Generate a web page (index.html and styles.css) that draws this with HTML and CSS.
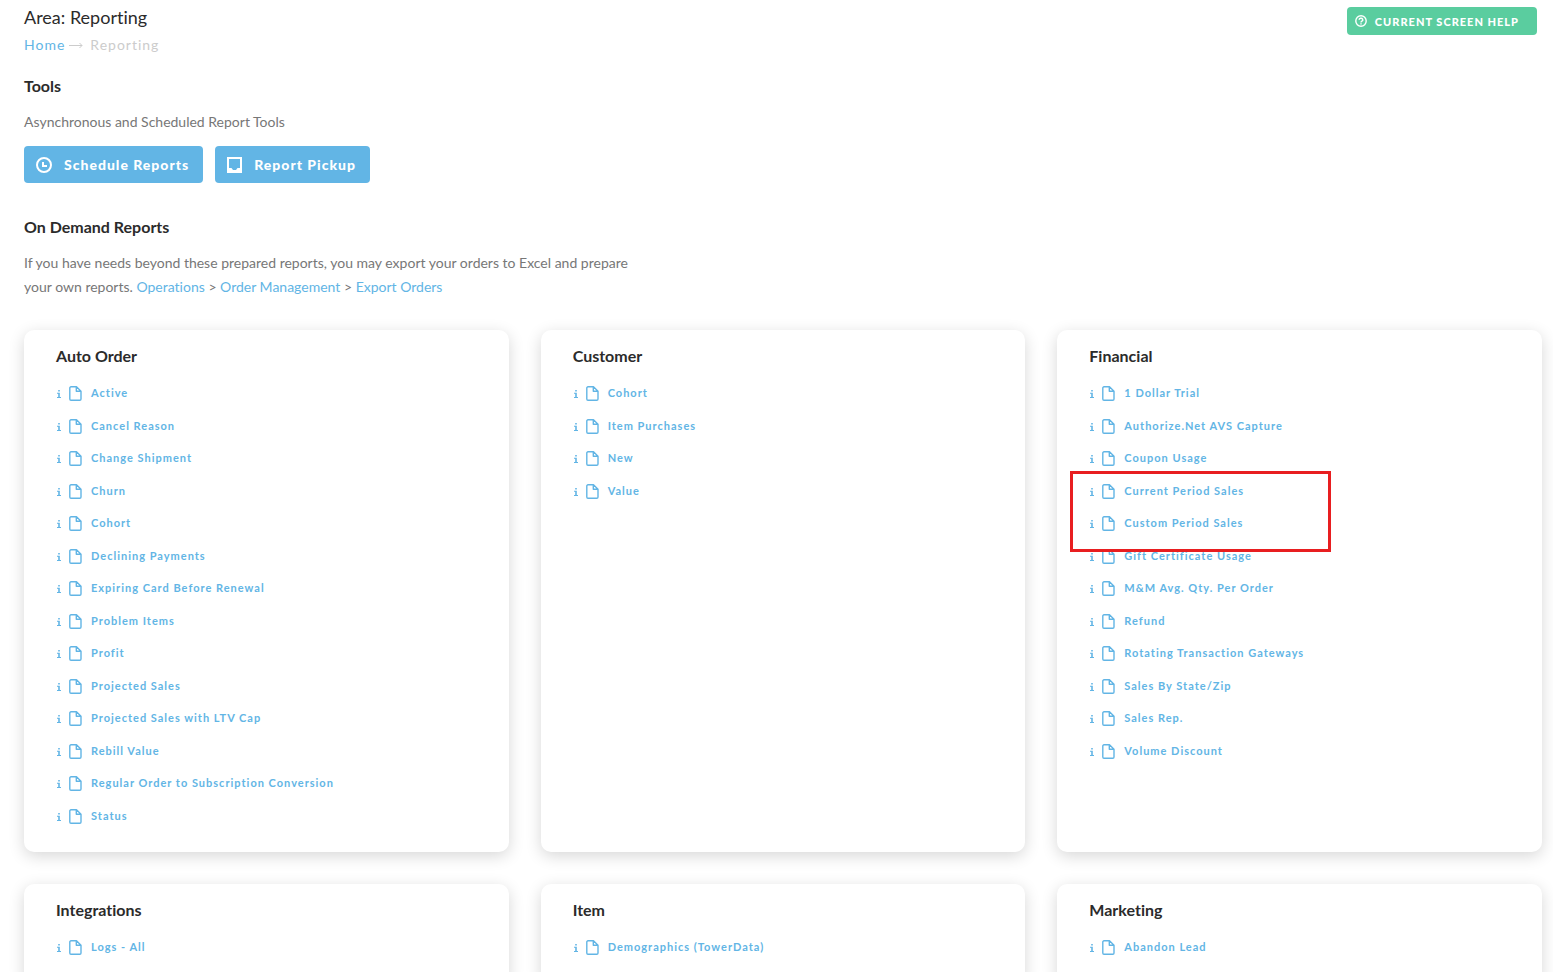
FILE: index.html
```html
<!DOCTYPE html>
<html lang="en">
<head>
  <meta charset="UTF-8" />
  <meta name="viewport" content="width=device-width, initial-scale=1.0"/>
  <title>Area: Reporting</title>
  <link rel="stylesheet" href="styles.css">
</head>
<body>
  <header class="page-header">
    <div>
      <h1>Area: Reporting</h1>
      <nav class="breadcrumb" aria-label="Breadcrumb">
        <a href="#">Home</a>
        <svg width="14" height="7" viewBox="0 0 14 7" fill="none" stroke="currentColor"><path d="M0 3.5h13M10.5 1l2.5 2.5L10.5 6"/></svg>
        <span>Reporting</span>
      </nav>
    </div>
    <button type="button" class="btn-help">
      <svg width="12" height="12" viewBox="0 0 12 12" fill="none" stroke="currentColor" stroke-width="1.4"><circle cx="6" cy="6" r="5.2"/><path d="M4.2 4.9a1.8 1.6 0 1 1 2.7 1.3c-.6.3-.9.6-.9 1.2M6 8.300v1.200"/></svg>
      Current Screen Help
    </button>
  </header>

  <main>
    <section class="tools">
      <h2>Tools</h2>
      <p>Asynchronous and Scheduled Report Tools</p>
      <div class="buttons">
        <button type="button" class="btn">
          <svg width="16" height="16" viewBox="0 0 16 16" fill="none" stroke="currentColor" stroke-width="2"><circle cx="8" cy="8" r="7"/><path d="M7 5v4h4"/></svg>
          Schedule Reports
        </button>
        <button type="button" class="btn">
          <svg width="15" height="16" viewBox="0 0 15 16" fill="currentColor"><path fill-rule="evenodd" d="M0 0h15v16H0zM2 2v9h2.500l1.500 2h3l1.500-2H13V2z"/></svg>
          Report Pickup
        </button>
      </div>
    </section>

    <section class="on-demand">
      <h2>On Demand Reports</h2>
      <p>If you have needs beyond these prepared reports, you may export your orders to Excel and prepare your own reports. <a href="#">Operations</a> &gt; <a href="#">Order Management</a> &gt; <a href="#">Export Orders</a></p>
    </section>

    <div class="cards" id="cards"></div>
  </main>

  <script src="script.js"></script>
</body>
</html>
```
FILE: styles.css
```css
* {
  box-sizing: border-box;
}
body {
  height: 100vh;
  margin: 0;
  padding: 7px 11px 0 24px;
  overflow: hidden;
  font-family: Lato, sans-serif;
  font-size: 14px;
  font-variant-ligatures: none;
  line-height: 24px;
  color: #777;
  background: #fff;
}
h1, h2, h3, p, ul {
  margin: 0;
  padding: 0;
}
h1, h2, h3 {
  color: #2b2b2b;
}
a {
  color: #62b5e5;
  text-decoration: none;
}
a:hover {
  text-decoration: underline;
}
svg {
  flex: none;
}
button {
  display: flex;
  align-items: center;
  border: none;
  border-radius: 4px;
  color: #fff;
  font-family: inherit;
  cursor: pointer;
}

/* header */
.page-header {
  display: flex;
  justify-content: space-between;
  align-items: flex-start;
  padding-right: 5px;
}
h1 {
  font-size: 18px;
  font-weight: 400;
  line-height: 20px;
}
.breadcrumb {
  display: flex;
  align-items: center;
  margin-top: 6px;
  color: #ccc;
  letter-spacing: 1px;
}
.breadcrumb svg {
  margin: 0 7px 0 4px;
}
.btn-help {
  gap: 8px;
  height: 28px;
  padding: 0 18px 0 8px;
  background: #5acd9f;
  font-size: 11px;
  font-weight: 900;
  letter-spacing: 1px;
  text-transform: uppercase;
}

/* tools */
h2, h3 {
  font-size: 16px;
  font-weight: 700;
  line-height: 24px;
}
.tools {
  margin-top: 17px;
}
.tools p, .on-demand p {
  margin-top: 12px;
}
.buttons {
  display: flex;
  gap: 12px;
  margin-top: 12px;
}
.btn {
  gap: 12px;
  height: 37px;
  padding: 0 14px 0 12px;
  background: #62b5e5;
  font-size: 14px;
  font-weight: 900;
  letter-spacing: 1px;
}
.on-demand {
  max-width: 624px;
  margin-top: 32px;
}

/* report cards */
.cards {
  display: grid;
  grid-template-columns: repeat(3, 1fr);
  gap: 32px;
  margin-top: 31px;
}
.card {
  position: relative;
  padding: 14px 32px 20px;
  border-radius: 10px;
  background: #fff;
  box-shadow: 0 4px 16px rgba(0, 0, 0, 0.16);
}
.card ul {
  margin-top: 9px;
  list-style: none;
}
.card li {
  display: flex;
  align-items: center;
  height: 32px;
}
.card li:nth-child(even) {
  height: 33px;
}
.card li a {
  font-size: 11px;
  font-weight: 700;
  letter-spacing: 1px;
}
.info-icon, .file-icon {
  color: #62b5e5;
}
.info-icon {
  margin: 2px 8px 0 1px;
}
.file-icon {
  margin: 1px 9px 0 0;
}
.highlight {
  position: absolute;
  top: 141px;
  left: 13px;
  width: 261px;
  height: 81px;
  border: 3px solid #e81e20;
  pointer-events: none;
}
```
FILE: script.js
```js
const reports = [
  { title: "Auto Order", items: ["Active", "Cancel Reason", "Change Shipment", "Churn", "Cohort", "Declining Payments", "Expiring Card Before Renewal", "Problem Items", "Profit", "Projected Sales", "Projected Sales with LTV Cap", "Rebill Value", "Regular Order to Subscription Conversion", "Status"] },
  { title: "Customer", items: ["Cohort", "Item Purchases", "New", "Value"] },
  { title: "Financial", highlight: true, items: ["1 Dollar Trial", "Authorize.Net AVS Capture", "Coupon Usage", "Current Period Sales", "Custom Period Sales", "Gift Certificate Usage", "M&amp;M Avg. Qty. Per Order", "Refund", "Rotating Transaction Gateways", "Sales By State/Zip", "Sales Rep.", "Volume Discount"] },
  { title: "Integrations", items: ["Logs - All"] },
  { title: "Item", items: ["Demographics (TowerData)"] },
  { title: "Marketing", items: ["Abandon Lead"] }
];

const infoIcon = `<svg class="info-icon" width="4" height="8" viewBox="0 0 4 8" fill="currentColor"><path d="M1.200 0h1.600v1.500H1.200zM0 2.800h2.800V7H4v1H0V7h1.200V3.800H0z"/></svg>`;
const fileIcon = `<svg class="file-icon" width="13" height="15" viewBox="0 0 13 15" fill="none" stroke="currentColor" stroke-width="1.400" stroke-linejoin="round"><path d="M2 .8h5.500L12 5.200V13a1.200 1.200 0 0 1-1.200 1.200H2A1.200 1.200 0 0 1 .8 13V2A1.200 1.200 0 0 1 2 .8zM7.300 1v4.300H12"/></svg>`;

document.getElementById("cards").innerHTML = reports.map(card => `
  <section class="card">
    <h3>${card.title}</h3>
    <ul>
      ${card.items.map(item => `<li>${infoIcon}${fileIcon}<a href="#">${item}</a></li>`).join("")}
    </ul>
    ${card.highlight ? `<div class="highlight"></div>` : ""}
  </section>`).join("");
```
